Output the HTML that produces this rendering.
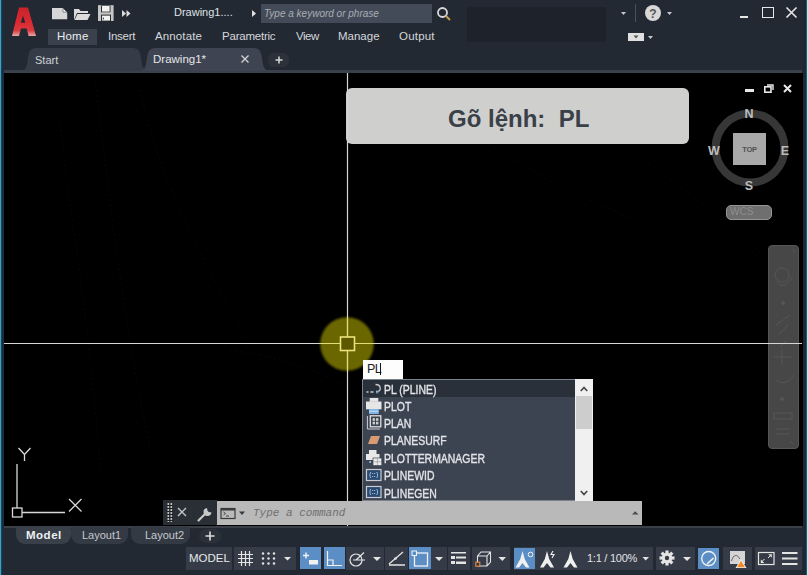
<!DOCTYPE html>
<html><head><meta charset="utf-8">
<style>
*{margin:0;padding:0;box-sizing:border-box}
html,body{width:808px;height:575px;overflow:hidden;background:#232932;font-family:"Liberation Sans",sans-serif;position:relative}
.a{position:absolute}
.t{position:absolute;color:#d4d7dc;font-size:11px;line-height:12px;white-space:nowrap}
svg{position:absolute;overflow:visible}
</style></head><body>
<!-- top -->
<div class="a" style="left:0;top:0;width:808px;height:48px;background:#232932"></div>
<div class="a" style="left:467px;top:7px;width:139px;height:35px;background:#1e232b"></div>
<!-- file tab bar -->
<div class="a" style="left:0;top:48px;width:808px;height:25px;background:#232932"></div>
<div class="a" style="left:4px;top:70px;width:798px;height:3px;background:#3b414c"></div>
<!-- canvas -->
<div class="a" style="left:4px;top:73px;width:798px;height:453px;background:#000"></div>
<!-- faint canvas texture -->
<svg style="left:4px;top:73px" width="798" height="453" viewBox="4 73 798 453">
<g stroke="#090909" stroke-width="1" fill="none" stroke-dasharray="2 3">
<path d="M95 80 C110 200 120 300 150 450"/>
<path d="M140 90 C160 180 200 260 260 360"/>
<path d="M60 120 C70 220 90 320 100 470"/>
<path d="M420 80 C480 150 560 190 660 230"/>
<path d="M530 90 C600 140 680 170 760 260"/>
<path d="M230 350 C300 360 380 380 460 500"/>
</g>
</svg>

<!-- bottom -->
<div class="a" style="left:0;top:526px;width:808px;height:49px;background:#232932"></div>
<div class="a" style="left:4px;top:525.5px;width:798px;height:2px;background:#3a3f48"></div>
<!-- strips -->
<div class="a" style="left:0;top:0;width:1px;height:575px;background:#4c9db6"></div>
<div class="a" style="left:1px;top:0;width:1px;height:575px;background:#0e4664"></div>
<div class="a" style="left:2px;top:0;width:2px;height:575px;background:#1d2c3c"></div>
<div class="a" style="left:803px;top:0;width:3px;height:575px;background:#1c2833"></div>
<div class="a" style="left:799px;top:73px;width:4px;height:453px;background:#000"></div>
<div class="a" style="left:806px;top:0;width:1px;height:575px;background:#24586a"></div>
<div class="a" style="left:807px;top:0;width:1px;height:575px;background:#b8eaf6"></div>
<!-- logo -->
<svg style="left:0;top:0" width="40" height="40" viewBox="0 0 40 40">
<defs><linearGradient id="lg" x1="0" y1="0" x2="0" y2="1"><stop offset="0" stop-color="#c8232c"/><stop offset="0.55" stop-color="#dc2a33"/><stop offset="0.8" stop-color="#d8383e"/><stop offset="1" stop-color="#e8a8a8"/></linearGradient></defs>
<path d="M19 7.5 L28 7.5 L36 36 L28.6 36 L26.6 28.6 L21 28.6 L19 36 L12 36 Z M23 15.5 L25.3 22.8 L20.8 22.8 Z" fill="url(#lg)" fill-rule="evenodd"/>
</svg>
<!-- quick access icons -->
<svg style="left:0;top:0" width="70" height="25" viewBox="0 0 70 25">
<path d="M52 8 H62.5 L67.2 12.7 V19.2 H52 Z" fill="#d6d6d6"/>
<path d="M63 8.5 V12.2 H66.7" fill="#f8f8f8" stroke="#7a7a7a" stroke-width="0.9"/>
</svg>
<svg style="left:74px;top:8px" width="17" height="12" viewBox="0 0 17 12">
<path d="M0 1 H5 L6.5 3 H14 V5 H3 L0 12 Z" fill="#dcdcdc"/><path d="M3.5 6 H16.5 L13.5 12 H0.5 Z" fill="#dcdcdc"/>
</svg>
<svg style="left:0;top:0" width="120" height="30" viewBox="0 0 120 30">
<rect x="98" y="5.2" width="15.6" height="15.8" fill="#c6c6c6"/>
<rect x="101" y="5.5" width="9.5" height="6.8" fill="#2b2b2b"/>
<rect x="102" y="6" width="7.6" height="5.6" fill="#f2f2f2"/>
<rect x="101" y="14.6" width="10" height="6.4" fill="#2b2b2b"/>
<rect x="102" y="15.6" width="8" height="5" fill="#f2f2f2"/>
<rect x="102.8" y="17.5" width="1" height="2" fill="#333"/>
</svg>
<svg style="left:122px;top:10px" width="9" height="7" viewBox="0 0 9 7">
<path d="M0 0 L4 3.5 L0 7 Z M4.5 0 L8.5 3.5 L4.5 7 Z" fill="#dcdcdc"/>
</svg>
<div class="t" style="left:174px;top:6px;font-size:11px;color:#dfe2e6">Drawing1....</div>
<svg style="left:252px;top:10px" width="4" height="7" viewBox="0 0 4 7"><path d="M0 0 L4 3.5 L0 7 Z" fill="#e0e0e0"/></svg>
<!-- search -->
<div class="a" style="left:261px;top:4px;width:171px;height:19px;background:#444b58"></div>
<div class="t" style="left:264px;top:8px;font-size:10px;font-style:italic;color:#a9adb5">Type a keyword or phrase</div>
<svg style="left:437px;top:7px" width="15" height="14" viewBox="0 0 15 14">
<circle cx="5.5" cy="5.5" r="4.5" fill="none" stroke="#d8d8d8" stroke-width="1.8"/>
<path d="M9 9 L13 13" stroke="#c89a50" stroke-width="2"/>
</svg>
<!-- right top -->
<svg style="left:621px;top:12px" width="5" height="3" viewBox="0 0 5 3"><path d="M0 0 H5 L2.5 3 Z" fill="#c8c8c8"/></svg>
<div class="a" style="left:635px;top:4px;width:1px;height:18px;background:#4a505a"></div>
<svg style="left:645px;top:5px" width="16" height="16" viewBox="0 0 16 16">
<circle cx="8" cy="8" r="8" fill="#d8d8d8"/>
<text x="8" y="12.5" text-anchor="middle" font-family="Liberation Sans" font-weight="bold" font-size="12" fill="#555">?</text>
</svg>
<svg style="left:667px;top:12px" width="5" height="3" viewBox="0 0 5 3"><path d="M0 0 H5 L2.5 3 Z" fill="#c8c8c8"/></svg>
<div class="a" style="left:740px;top:16px;width:8px;height:2px;background:#e6e6e6"></div>
<div class="a" style="left:762px;top:7px;width:12px;height:11px;border:1.5px solid #e6e6e6"></div>
<svg style="left:786px;top:7px" width="11" height="11" viewBox="0 0 11 11"><path d="M0.5 0.5 L10.5 10.5 M10.5 0.5 L0.5 10.5" stroke="#e6e6e6" stroke-width="1.6"/></svg>
<svg style="left:628px;top:33px" width="16" height="8" viewBox="0 0 16 8"><rect width="16" height="8" fill="#e0e0e0"/><path d="M5.5 2.5 H10.5 L8 5.5 Z" fill="#555"/></svg>
<svg style="left:648px;top:36px" width="5" height="3" viewBox="0 0 5 3"><path d="M0 0 H5 L2.5 3 Z" fill="#c8c8c8"/></svg>

<!-- ribbon tabs -->
<div class="a" style="left:48px;top:29px;width:49px;height:16px;background:#3a414d"></div>
<div class="t" style="left:57px;top:30px;font-size:11.5px;letter-spacing:0.2px;color:#eceef0">Home</div>
<div class="t" style="left:108px;top:30px;font-size:11.5px;letter-spacing:-0.25px">Insert</div>
<div class="t" style="left:155px;top:30px;font-size:11.5px;letter-spacing:0.12px">Annotate</div>
<div class="t" style="left:222px;top:30px;font-size:11.5px;letter-spacing:-0.22px">Parametric</div>
<div class="t" style="left:296px;top:30px;font-size:11.5px;letter-spacing:-0.5px">View</div>
<div class="t" style="left:338px;top:30px;font-size:11.5px">Manage</div>
<div class="t" style="left:399px;top:30px;font-size:11.5px;letter-spacing:0.2px">Output</div>

<!-- file tabs -->
<svg style="left:0;top:0" width="300" height="75" viewBox="0 0 300 75">
<path d="M20 71 C26 71 27 66 28 58 C29 50 31 48 38 48 L131 48 C138 48 140 50 141 58 C142 66 143 71 149 71 Z" fill="#363c47"/>
<path d="M139 71 C145 71 146 66 147 58 C148 50 150 48 157 48 L252 48 C259 48 261 50 262 58 C263 66 264 71 270 71 Z" fill="#3e4451"/>
</svg>
<div class="t" style="left:35px;top:54px;color:#cfd2d7">Start</div>
<div class="t" style="left:153px;top:53px;font-size:11.5px;line-height:13px;color:#e4e6ea">Drawing1*</div>
<svg style="left:241px;top:55px" width="8" height="8" viewBox="0 0 8 8"><path d="M0.5 0.5 L7.5 7.5 M7.5 0.5 L0.5 7.5" stroke="#d0d0d0" stroke-width="1.4"/></svg>
<div class="a" style="left:268px;top:53px;width:21px;height:14px;background:#2c313a;border-radius:6px"></div>
<svg style="left:275px;top:56px" width="8" height="8" viewBox="0 0 8 8"><path d="M4 0.5 V7.5 M0.5 4 H7.5" stroke="#d8d8d8" stroke-width="1.5"/></svg>

<!-- Go lenh box -->
<div class="a" style="left:346px;top:88px;width:343px;height:56px;background:#cfcfcd;border-radius:6px"></div>
<div class="t" style="left:448px;top:105px;font-size:24px;line-height:28px;font-weight:bold;color:#3a4048;letter-spacing:0">Gõ lệnh:&nbsp; PL</div>


<!-- nav compass -->
<div class="a" style="left:745px;top:89px;width:9px;height:3px;background:#e8e8e8"></div>
<svg style="left:764px;top:84px" width="10" height="9" viewBox="0 0 10 9"><rect x="0.8" y="2.8" width="6.2" height="5.4" fill="none" stroke="#e8e8e8" stroke-width="1.6"/><path d="M3 1 H9 V6" fill="none" stroke="#e8e8e8" stroke-width="1.4"/></svg>
<svg style="left:783px;top:84px" width="9" height="9" viewBox="0 0 9 9"><path d="M1 1 L8 8 M8 1 L1 8" stroke="#e8e8e8" stroke-width="2"/></svg>
<svg style="left:700px;top:100px" width="100" height="100" viewBox="700 100 100 100">
<circle cx="750" cy="148" r="34.5" fill="none" stroke="#373737" stroke-width="8"/>
<rect x="733" y="133" width="33" height="32" fill="#a9a9a9"/>
<text x="749.5" y="152" text-anchor="middle" font-family="Liberation Sans" font-weight="bold" font-size="7.5" fill="#505050" letter-spacing="-0.3">TOP</text>
<g font-family="Liberation Sans" font-weight="bold" font-size="12.5" fill="#bdbdbd" text-anchor="middle">
<text x="749" y="118">N</text>
<text x="749" y="190">S</text>
<text x="714" y="154.5">W</text>
<text x="785" y="154.5">E</text>
</g>
</svg>
<div class="a" style="left:726px;top:205px;width:46px;height:15px;background:#6f6f6f;border:1px solid #959595;border-radius:5px"></div>
<div class="t" style="left:730px;top:207px;font-size:10px;line-height:10px;color:#8e8e8e">WCS</div>

<!-- navbar -->
<div class="a" style="left:768px;top:245px;width:31px;height:204px;background:#474747;border:1px solid #555;border-radius:4px"></div>
<svg style="left:768px;top:245px" width="31" height="204" viewBox="0 0 31 204">
<g fill="none" stroke="#565656" stroke-width="1">
<path d="M25 4 L27 8"/>
<circle cx="14" cy="30" r="7"/><path d="M9 36 C12 44 20 40 24 32"/>
<circle cx="15" cy="58" r="1.5" fill="#565656"/>
<path d="M8 80 L22 70 M10 90 L20 80 M12 102 L18 96"/>
<path d="M6 112 H24 M14 104 V120"/>
<path d="M8 135 C14 140 20 138 26 130"/>
<circle cx="14" cy="154" r="1.5" fill="#565656"/>
<rect x="6" y="168" width="18" height="6"/>
<path d="M8 184 H22 M8 189 H22"/>
<path d="M22 196 L25 199"/>
</g>
</svg>

<!-- UCS icon -->
<svg style="left:0;top:440px" width="100" height="85" viewBox="0 440 100 85">
<g stroke="#d8d8d8" stroke-width="1.3" fill="none">
<path d="M17 508 V464"/>
<path d="M22 512.5 H65"/>
<rect x="12.5" y="508" width="9.5" height="9"/>
<path d="M18.5 448 L24.5 454.5 L30.5 448 M24.5 454.5 V461"/>
<path d="M69 499 L81.5 511.5 M81.5 499 L69 511.5"/>
</g>
</svg>
<!-- aperture / crosshair -->
<svg style="left:0;top:0" width="808" height="575" viewBox="0 0 808 575">
<defs><filter id="bl" x="-20%" y="-20%" width="140%" height="140%"><feGaussianBlur stdDeviation="0.9"/></filter></defs><circle cx="347" cy="344" r="26.8" fill="#6a6600" filter="url(#bl)"/>
<path d="M4 343.5 H802" stroke="#d6d6d6" stroke-width="1.2"/>
<path d="M347.5 73 V526" stroke="#d6d6d6" stroke-width="1.2"/>
<path d="M320 343.5 H374 M347.5 317 V371" stroke="#e2dc7a" stroke-width="1.2"/>
<rect x="340.5" y="337" width="14" height="13.5" fill="#5c5800" stroke="#ece37a" stroke-width="1.6"/>
</svg>

<!-- input box -->
<div class="a" style="left:363px;top:360px;width:40px;height:19px;background:#fdfdfd"></div>
<div class="t" style="left:367px;top:362px;font-size:12.5px;line-height:14px;color:#1a1a1a;letter-spacing:-0.6px">PL</div>
<div class="a" style="left:379.5px;top:363px;width:1px;height:12px;background:#111"></div>

<!-- autocomplete -->
<div class="a" style="left:362px;top:379px;width:231px;height:122px;background:#3d4451;border:1px solid #7c828c;border-right:none"></div>
<div class="a" style="left:363px;top:380px;width:212px;height:17px;background:#2a303a"></div>
<div class="a" style="left:575px;top:379px;width:18px;height:122px;background:#f0f0f0"></div>
<div class="a" style="left:576px;top:396px;width:16px;height:33px;background:#cdcdcd"></div>
<svg style="left:580px;top:386px" width="8" height="6" viewBox="0 0 8 6"><path d="M0.8 5 L4 1.5 L7.2 5" fill="none" stroke="#4a4a4a" stroke-width="1.8"/></svg>
<svg style="left:580px;top:490px" width="8" height="6" viewBox="0 0 8 6"><path d="M0.8 1 L4 4.5 L7.2 1" fill="none" stroke="#4a4a4a" stroke-width="1.8"/></svg>
<div class="t" style="left:384px;top:382.5px;font-size:12px;line-height:14px;color:#e2e4e8;transform:scaleX(0.87);transform-origin:0 0;-webkit-text-stroke:0.35px #e2e4e8">PL (PLINE)</div>
<div class="t" style="left:384px;top:399.5px;font-size:12px;line-height:14px;color:#e2e4e8;transform:scaleX(0.87);transform-origin:0 0;-webkit-text-stroke:0.35px #e2e4e8">PLOT</div>
<div class="t" style="left:384px;top:416.5px;font-size:12px;line-height:14px;color:#e2e4e8;transform:scaleX(0.87);transform-origin:0 0;-webkit-text-stroke:0.35px #e2e4e8">PLAN</div>
<div class="t" style="left:384px;top:433.5px;font-size:12px;line-height:14px;color:#e2e4e8;transform:scaleX(0.87);transform-origin:0 0;-webkit-text-stroke:0.35px #e2e4e8">PLANESURF</div>
<div class="t" style="left:384px;top:451.5px;font-size:12px;line-height:14px;color:#e2e4e8;transform:scaleX(0.87);transform-origin:0 0;-webkit-text-stroke:0.35px #e2e4e8">PLOTTERMANAGER</div>
<div class="t" style="left:384px;top:468.5px;font-size:12px;line-height:14px;color:#e2e4e8;transform:scaleX(0.87);transform-origin:0 0;-webkit-text-stroke:0.35px #e2e4e8">PLINEWID</div>
<div class="t" style="left:384px;top:486.5px;font-size:12px;line-height:14px;color:#e2e4e8;transform:scaleX(0.87);transform-origin:0 0;-webkit-text-stroke:0.35px #e2e4e8">PLINEGEN</div>
<svg style="left:362px;top:379px" width="22" height="122" viewBox="362 379 22 122">
<!-- pline -->
<path d="M366.5 392 H368.5 M370.5 392 H373.5 M375.5 384.5 C381.5 384.5 382 392 376 392" fill="none" stroke="#c8ccd2" stroke-width="1.3"/>
<path d="M376.5 390 L378.5 392 L376.5 394" fill="none" stroke="#4a90d0" stroke-width="1"/>
<!-- plot printer -->
<rect x="369.7" y="398" width="8.6" height="3.8" fill="#e6e6e6"/>
<rect x="366" y="401.5" width="15.5" height="7.8" fill="#e6e6e6"/>
<rect x="369" y="409" width="9.7" height="5" fill="#7fb4e4"/>
<rect x="369" y="410.8" width="9.7" height="0.8" fill="#d8ecf8"/>
<!-- plan -->
<path d="M367.4 416 V429 H380" fill="none" stroke="#d0d0d0" stroke-width="1"/>
<rect x="370.3" y="415.8" width="10.5" height="11" fill="#3d4451" stroke="#e0e0e0" stroke-width="1.3"/>
<g fill="#cfcfcf"><rect x="372.6" y="418.2" width="2.4" height="2.6"/><rect x="376" y="418.2" width="2.4" height="2.6"/><rect x="372.6" y="421.8" width="2.4" height="2.6"/><rect x="376" y="421.8" width="2.4" height="2.6"/></g>
<!-- planesurf -->
<path d="M371 436 H380 L377 444 H368 Z" fill="#d89a72"/>
<!-- plottermanager -->
<rect x="369" y="450" width="7.5" height="4" fill="#e8e8e8"/>
<rect x="366" y="454" width="13.5" height="6" fill="#e8e8e8"/>
<rect x="369.3" y="461" width="1.8" height="2" fill="#8ab8e0"/>
<rect x="373" y="458" width="8.8" height="7.6" fill="#ececec" stroke="#3d4451" stroke-width="0.7"/>
<path d="M373.5 461.8 H381.5 M377.4 458.5 V465.5" stroke="#8a8a8a" stroke-width="0.6"/>
<!-- plinewid -->
<rect x="366.5" y="469.5" width="14.5" height="11" fill="#2a4a70" stroke="#c8ccd2" stroke-width="1.2"/>
<path d="M370.8 472 C369.6 473.5 369.6 476.5 370.8 478 M376.7 472 C377.9 473.5 377.9 476.5 376.7 478" stroke="#a8c8ea" stroke-width="0.9" fill="none"/>
<g fill="#a8c8ea"><rect x="372.2" y="473" width="1" height="1"/><rect x="374.2" y="473" width="1" height="1"/><rect x="372.2" y="476" width="1" height="1"/><rect x="374.2" y="476" width="1" height="1"/></g>
<rect x="366.5" y="486.5" width="14.5" height="11" fill="#2a4a70" stroke="#c8ccd2" stroke-width="1.2"/>
<path d="M370.8 489 C369.6 490.5 369.6 493.5 370.8 495 M376.7 489 C377.9 490.5 377.9 493.5 376.7 495" stroke="#a8c8ea" stroke-width="0.9" fill="none"/>
<g fill="#a8c8ea"><rect x="372.2" y="490" width="1" height="1"/><rect x="374.2" y="490" width="1" height="1"/><rect x="372.2" y="493" width="1" height="1"/><rect x="374.2" y="493" width="1" height="1"/></g>
</svg>

<!-- command line -->
<div class="a" style="left:163px;top:500px;width:54px;height:25px;background:#2a2e35"></div>
<div class="a" style="left:217px;top:501px;width:425px;height:24px;background:#b9b9b9"></div>
<svg style="left:165px;top:500px" width="52" height="25" viewBox="165 500 52 25">
<g fill="#bfbfbf"><rect x="167.5" y="503" width="1.6" height="19"/><rect x="170.5" y="503" width="1.6" height="19"/></g>
<g fill="#1e1e1e"><rect x="167" y="505" width="6" height="1"/><rect x="167" y="508" width="6" height="1"/><rect x="167" y="511" width="6" height="1"/><rect x="167" y="514" width="6" height="1"/><rect x="167" y="517" width="6" height="1"/><rect x="167" y="520" width="6" height="1"/></g>
<path d="M178 508 L186 516 M186 508 L178 516" stroke="#c4c4c4" stroke-width="1.4"/>
<path d="M198.5 520.5 L205.5 513.5" stroke="#c8c8c8" stroke-width="2.2" stroke-linecap="round"/><path d="M207 508 A4 4 0 1 0 211.5 512.5 L208.8 512 L207.5 510.7 Z" fill="#c8c8c8"/>
</svg>
<svg style="left:217px;top:501px" width="425" height="24" viewBox="217 501 425 24">
<rect x="221" y="508.5" width="14" height="10" fill="none" stroke="#3a3a3a" stroke-width="1.2"/>
<rect x="221" y="508.5" width="14" height="2" fill="#3a3a3a"/>
<path d="M223.5 512 L225.5 513.5 L223.5 515 M226 516 H229" stroke="#3a3a3a" stroke-width="0.9" fill="none"/>
<path d="M239 511.5 H245 L242 515 Z" fill="#3a3a3a"/>
<path d="M632 514.5 H638.5 L635.2 511.3 Z" fill="#4a4a4a"/>
</svg>
<div class="t" style="left:253px;top:507px;font-family:'Liberation Mono',monospace;font-style:italic;font-size:11px;color:#6f6f6f">Type a command</div>

<!-- layout tabs -->
<div class="a" style="left:16px;top:527px;width:55px;height:17px;background:#39404a;border-radius:3px 3px 9px 9px"></div>
<div class="a" style="left:71px;top:527px;width:57px;height:17px;background:#343a44;border-radius:3px 3px 9px 9px"></div>
<div class="a" style="left:131px;top:527px;width:59px;height:17px;background:#343a44;border-radius:3px 3px 9px 9px"></div>
<div class="a" style="left:199px;top:529px;width:22px;height:14px;background:#2b3039;border-radius:7px"></div>
<svg style="left:205px;top:531px" width="10" height="10" viewBox="0 0 10 10"><path d="M5 0.5 V9.5 M0.5 5 H9.5" stroke="#dcdcdc" stroke-width="1.6"/></svg>
<div class="t" style="left:26px;top:528.5px;font-size:11.5px;font-weight:bold;color:#eef0f2;letter-spacing:0.5px">Model</div>
<div class="t" style="left:82px;top:529px;color:#c4c8ce">Layout1</div>
<div class="t" style="left:145px;top:529px;color:#c4c8ce">Layout2</div>


<!-- status bar -->
<svg style="left:0;top:540px" width="808" height="35" viewBox="0 540 808 35">
<g fill="#363c47">
<rect x="186" y="547" width="46" height="23"/>
<rect x="234" y="547" width="62" height="23"/>
<rect x="346" y="547" width="38" height="23"/>
<rect x="385" y="547" width="23" height="23"/>
<rect x="409" y="547" width="38" height="23"/>
<rect x="448" y="547" width="22" height="23"/>
<rect x="472" y="547" width="38" height="23"/>
<rect x="514" y="547" width="139" height="23"/>
<rect x="656" y="547" width="39" height="23"/>
<rect x="723" y="547" width="29" height="23"/>
<rect x="755" y="547" width="47" height="23"/>
</g>
<g fill="#5b8ec4">
<rect x="300" y="547" width="21" height="22"/>
<rect x="324" y="547" width="21" height="22"/>
<rect x="409" y="547" width="22" height="22"/>
<rect x="514" y="548" width="21" height="21"/>
<rect x="698" y="548" width="21" height="21"/>
</g>
<g stroke="#e4e4e4" stroke-width="1.2" fill="none">
<!-- grid -->
<path d="M241.5 551 V566 M245.5 551 V566 M249.5 551 V566 M238 554.5 H253 M238 558.5 H253 M238 562.5 H253"/>
</g>
<g fill="#e4e4e4">
<!-- snap dots -->
<circle cx="263" cy="553.5" r="1.2"/><circle cx="268.5" cy="553.5" r="1.2"/><circle cx="274" cy="553.5" r="1.2"/>
<circle cx="263" cy="558.5" r="1.2"/><circle cx="268.5" cy="558.5" r="1.2"/><circle cx="274" cy="558.5" r="1.2"/>
<circle cx="263" cy="563.5" r="1.2"/><circle cx="268.5" cy="563.5" r="1.2"/><circle cx="274" cy="563.5" r="1.2"/>
<path d="M284 557 H291 L287.5 560.5 Z"/>
<path d="M373 557 H381 L377 561 Z"/>
<path d="M435 557 H443 L439 561 Z"/>
<path d="M498.5 557 H506 L502.3 561 Z"/>
<path d="M642.5 557 H649 L645.7 560.5 Z"/>
<path d="M683 557 H691 L687 561 Z"/>
</g>
<!-- infer -->
<path d="M303 555.5 H309 M306 552.5 V558.5" stroke="#f2f2f2" stroke-width="1.4"/>
<rect x="309" y="560" width="9" height="4.5" fill="#f2f2f2"/>
<!-- ortho -->
<path d="M327.5 551 V565.5 H342 M327.5 560 H333 V565.5" stroke="#f2f2f2" stroke-width="1.2" fill="none"/>
<!-- polar -->
<circle cx="356" cy="560" r="6" fill="none" stroke="#e4e4e4" stroke-width="1.2"/>
<path d="M356 560 L364 552.5 M353 560 H365" stroke="#e4e4e4" stroke-width="1.2" fill="none"/>
<!-- isodraft -->
<path d="M389 564 L403 552 M389 565 H405" stroke="#e4e4e4" stroke-width="1.3" fill="none"/>
<circle cx="395.5" cy="558.5" r="1.3" fill="#e4e4e4"/>
<!-- osnap -->
<rect x="414.5" y="553" width="13" height="13" fill="none" stroke="#f2f2f2" stroke-width="1.3"/>
<rect x="412" y="551" width="4.5" height="4.5" fill="#5b8ec4" stroke="#f2f2f2" stroke-width="1"/>
<!-- lineweight -->
<g fill="#e4e4e4"><rect x="451" y="552" width="15" height="1.5"/><rect x="451" y="556" width="4" height="3"/><rect x="456" y="556.5" width="10" height="2"/><rect x="451" y="561" width="4" height="3"/><rect x="456" y="561.5" width="10" height="2.5"/></g>
<!-- cube -->
<path d="M477.5 556 L481 552 H490.5 V562 L487 566 H477.5 Z M477.5 556 H487 V566 M487 556 L490.5 552" stroke="#e4e4e4" stroke-width="1.1" fill="none"/>
<rect x="475.8" y="562.2" width="4" height="4" fill="#3a3530" stroke="#e08a50" stroke-width="1.1"/>
<!-- annotation scale icons -->
<g fill="#f0f0f0">
<path d="M522.5 551 L524.7 559 L529.5 567.5 L526.0 567.5 L522.5 563 L519.0 567.5 L515.5 567.5 L520.3 559 Z"/>
<path d="M547 551 L549.2 559 L554 567.5 L550.5 567.5 L547 563 L543.5 567.5 L540 567.5 L544.8 559 Z"/>
<path d="M570.5 551 L572.7 559 L577.5 567.5 L574.0 567.5 L570.5 563 L567.0 567.5 L563.5 567.5 L568.3 559 Z"/>
</g>
<circle cx="530.5" cy="554.5" r="2.3" fill="none" stroke="#f2f2f2" stroke-width="1"/>
<path d="M553 551 L551 554.5 L554 554.5 L552 558" stroke="#f2f2f2" stroke-width="1.1" fill="none"/>
<!-- gear -->
<g transform="translate(667,558)">
<circle r="5.2" fill="#e4e4e4"/>
<g fill="#e4e4e4"><rect x="-1.6" y="-7.5" width="3.2" height="15"/><rect x="-1.6" y="-7.5" width="3.2" height="15" transform="rotate(45)"/><rect x="-1.6" y="-7.5" width="3.2" height="15" transform="rotate(90)"/><rect x="-1.6" y="-7.5" width="3.2" height="15" transform="rotate(135)"/></g>
<circle r="2.2" fill="#363c47"/>
</g>
<!-- hardware accel -->
<circle cx="708.7" cy="558.5" r="7" fill="none" stroke="#f2f2f2" stroke-width="1.4"/>
<path d="M707 564 L713.5 558" stroke="#f2f2f2" stroke-width="1.6"/>
<!-- warning -->
<rect x="730" y="551" width="15" height="13" fill="#d4d4d4"/>
<path d="M731.5 561 C733.5 554 737 554 740 559" stroke="#555" stroke-width="0.9" fill="none"/>
<path d="M735.5 568 L741 559 L746.5 568 Z" fill="#f0f0f0"/>
<path d="M737 567.3 L741 560.8 L745 567.3 Z" fill="#f08a2a"/>
<!-- fullscreen -->
<rect x="758.5" y="552.5" width="15.5" height="12" fill="none" stroke="#e4e4e4" stroke-width="1.2"/>
<path d="M761.5 562 L764.5 559 M771 555 L768 558" stroke="#e4e4e4" stroke-width="1" fill="none"/>
<path d="M760.8 563 V559.5 L764.3 563 Z M771.8 554.2 V557.7 L768.3 554.2 Z" fill="#e4e4e4"/>
<!-- hamburger -->
<g fill="#e4e4e4"><rect x="782" y="552" width="15.5" height="2"/><rect x="782" y="557.5" width="15.5" height="2"/><rect x="782" y="563" width="15.5" height="2"/></g>
</svg>
<div class="t" style="left:189px;top:552px;font-size:11.5px;line-height:13px;color:#e6e8ea">MODEL</div>
<div class="t" style="left:587px;top:552px;font-size:11px;line-height:13px;color:#e0e2e6;letter-spacing:-0.25px">1:1 / 100%</div>

</body></html>
